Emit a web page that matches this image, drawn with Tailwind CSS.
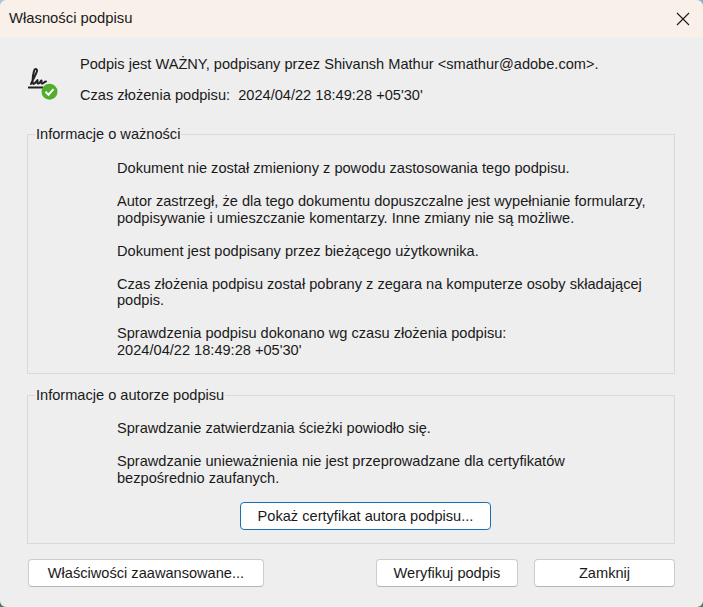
<!DOCTYPE html>
<html lang="pl">
<head>
  <meta charset="UTF-8" />
  <title>Własności podpisu</title>
  <script src="https://cdn.jsdelivr.net/npm/@tailwindcss/browser@4"></script>
</head>
<body class="relative w-[703px] h-[607px] overflow-hidden bg-[#eeeeee] text-[#1a1a1a] text-[14.6px] leading-[16.5px] font-['Liberation_Sans',Arial,sans-serif]">
  <!-- Title bar -->
  <div class="h-[37px] bg-[#f9f0ea] flex items-center justify-between pl-[9px] pr-[13px]">
    <span class="text-[14.8px]">Własności podpisu</span>
    <svg class="w-[14px] h-[14px]" viewBox="0 0 14 14" fill="none" stroke="#1a1a1a" stroke-width="1.1"><path d="M1 1l12 12M13 1L1 13"/></svg>
  </div>

  <div class="px-[27px] pr-[28px]">
    <!-- Summary -->
    <div class="flex h-[89px]">
      <svg class="w-[32px] h-[34px] mt-[31px] shrink-0" viewBox="0 0 32 34" fill="none">
        <path d="M4 16C6 11 10 5 10 2.5 10 0.5 7.5 0.5 7 3 6 7 5 12 6 15.5c1 1.5 3-1.5 4.500-3.500 0 2.500-.5 4 1 3.500s2-2.500 3-3c0 2-.5 3.500 1 3s2-2 3.500-2" stroke="#222" stroke-width="2" stroke-linecap="round" stroke-linejoin="round"/>
        <path d="M1 19.500h15" stroke="#222" stroke-width="2"/>
        <circle cx="22.500" cy="23.700" r="8" fill="#52ad2e"/>
        <path d="M18.500 23.700l3 3 5-5.500" stroke="#fff" stroke-width="2"/>
      </svg>
      <div class="ml-[21px] pt-[19px]">
        <p>Podpis jest WAŻNY, podpisany przez Shivansh Mathur &lt;smathur@adobe.com&gt;.</p>
        <p class="mt-[14px]">Czas złożenia podpisu:&nbsp; 2024/04/22 18:49:28 +05'30'</p>
      </div>
    </div>

    <!-- Validity -->
    <fieldset class="border border-[#d9d9d9] h-[248px] pl-[89px] pr-[20px]">
      <legend class="ml-[-82px] px-[1px] leading-[16px]">Informacje o ważności</legend>
      <div class="pt-[18px] flex flex-col gap-[16.5px]">
        <p>Dokument nie został zmieniony z powodu zastosowania tego podpisu.</p>
        <p>Autor zastrzegł, że dla tego dokumentu dopuszczalne jest wypełnianie formularzy,<br>podpisywanie i umieszczanie komentarzy. Inne zmiany nie są możliwe.</p>
        <p>Dokument jest podpisany przez bieżącego użytkownika.</p>
        <p>Czas złożenia podpisu został pobrany z zegara na komputerze osoby składającej<br>podpis.</p>
        <p>Sprawdzenia podpisu dokonano wg czasu złożenia podpisu:<br>2024/04/22 18:49:28 +05'30'</p>
      </div>
    </fieldset>

    <!-- Signer -->
    <fieldset class="border border-[#d9d9d9] h-[157px] mt-[13px] pl-[89px] pr-[20px]">
      <legend class="ml-[-82px] px-[1px] leading-[16px]">Informacje o autorze podpisu</legend>
      <div class="pt-[17px] flex flex-col gap-[16.5px]">
        <p>Sprawdzanie zatwierdzania ścieżki powiodło się.</p>
        <p>Sprawdzanie unieważnienia nie jest przeprowadzane dla certyfikatów<br>bezpośrednio zaufanych.</p>
      </div>
      <button class="block w-[251px] h-[28px] mt-[16px] ml-[123px] bg-white border border-[#1a6fb0] rounded-[4px]">Pokaż certyfikat autora podpisu...</button>
    </fieldset>

    <!-- Footer buttons -->
    <div class="flex mt-[15px] pl-[1px]">
      <button class="w-[236px] h-[28px] bg-white border border-[#cccccc] border-b-[#b5b5b5] rounded-[4px]">Właściwości zaawansowane...</button>
      <button class="w-[142px] h-[28px] ml-[112px] bg-white border border-[#cccccc] border-b-[#b5b5b5] rounded-[4px]">Weryfikuj podpis</button>
      <button class="w-[141px] h-[28px] ml-[16px] bg-white border border-[#cccccc] border-b-[#b5b5b5] rounded-[4px]">Zamknij</button>
    </div>
  </div>

  <!-- Window corners, wallpaper showing through -->
  <svg class="absolute top-0 left-0 w-[6px] h-[6px]" viewBox="0 0 6 6"><path d="M0 0h6C3 0 0 3 0 6z" fill="#a9c6dc"/></svg>
  <svg class="absolute top-0 right-0 w-[6px] h-[6px]" viewBox="0 0 6 6"><path d="M6 0H0c3 0 6 3 6 6z" fill="#8fb3d0"/></svg>
  <svg class="absolute bottom-0 left-0 w-[6px] h-[6px]" viewBox="0 0 6 6"><path d="M0 6h6C3 6 0 3 0 0z" fill="#4f7a62"/></svg>
  <svg class="absolute bottom-0 right-0 w-[6px] h-[6px]" viewBox="0 0 6 6"><path d="M6 6H0c3 0 6-3 6-6z" fill="#4f7a62"/></svg>
</body>
</html>
